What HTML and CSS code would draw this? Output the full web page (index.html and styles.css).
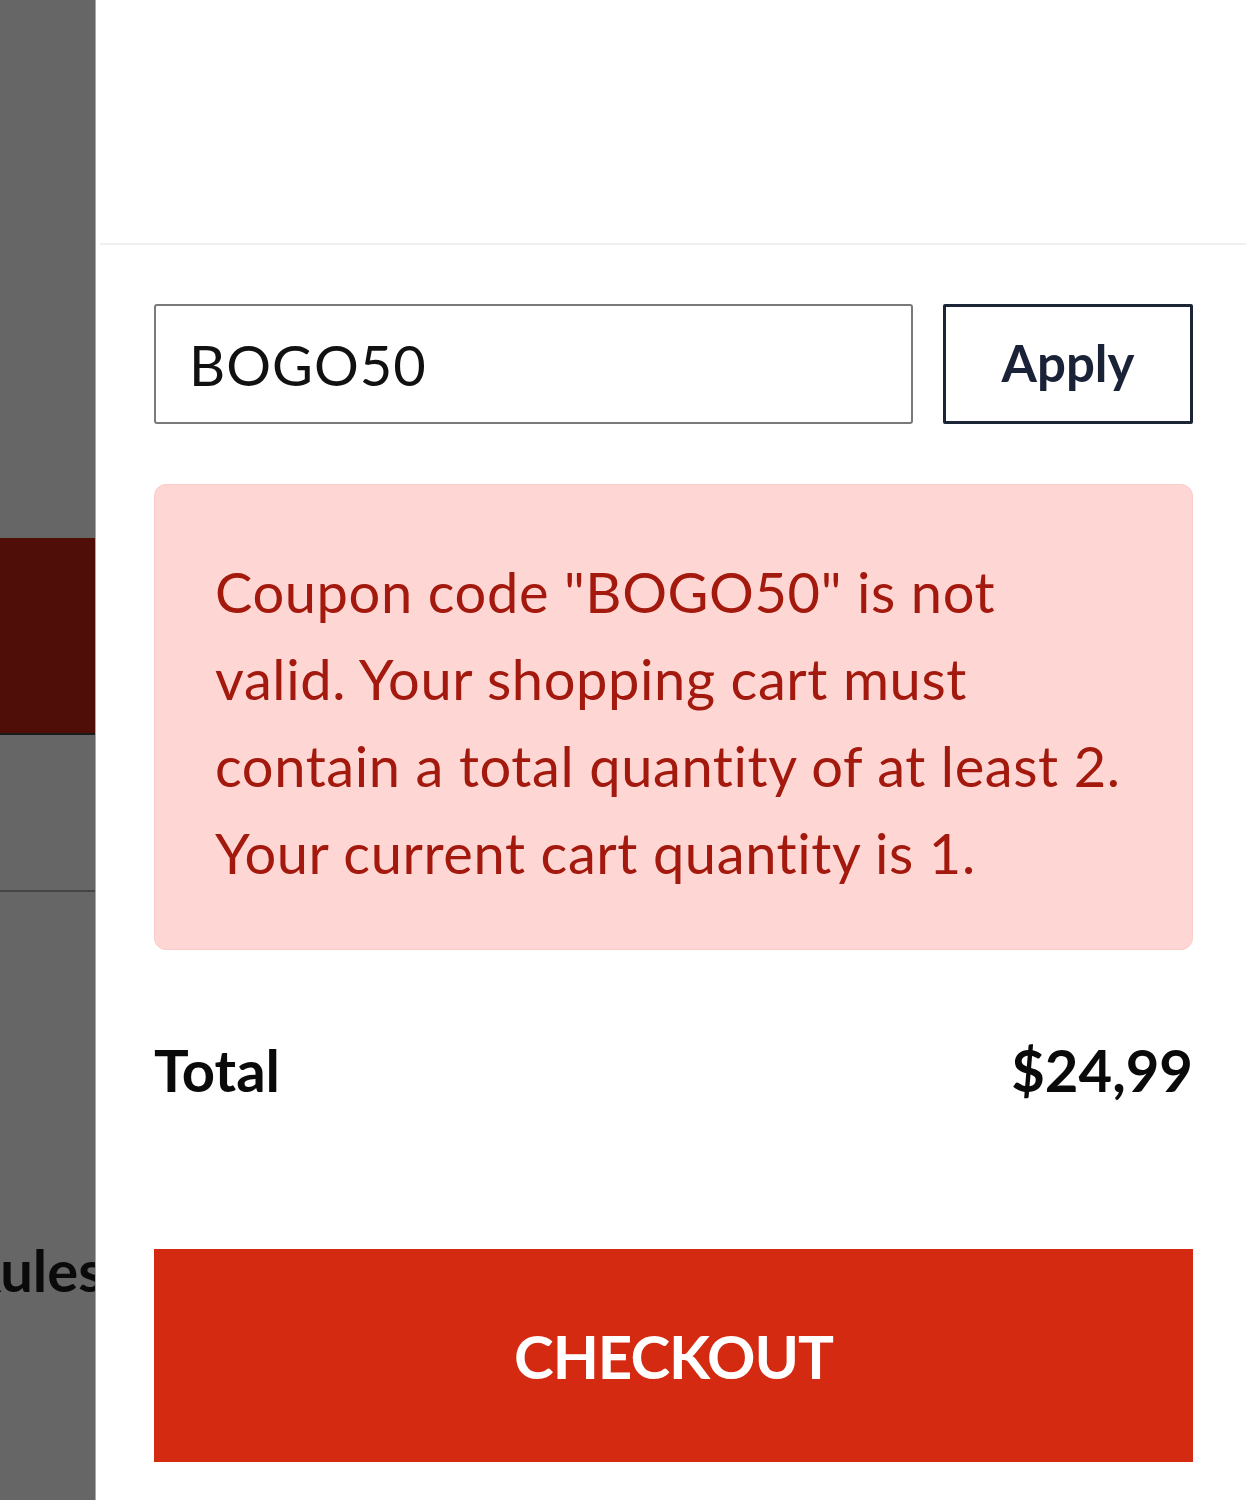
FILE: index.html
```html
<!DOCTYPE html>
<html lang="en">
<head>
<meta charset="utf-8">
<title>Cart</title>
<link rel="stylesheet" href="styles.css">
</head>
<body>
<div class="page">
  <div class="backdrop">
    <div class="bd-top"></div>
    <div class="bd-red"></div>
    <div class="bd-mid"></div>
    <div class="bd-low">
      <span class="bd-text">Rules</span>
    </div>
  </div>
  <aside class="drawer">
    <div class="drawer-head"></div>
    <div class="drawer-body">
      <form class="coupon">
        <input class="coupon-input" type="text" value="BOGO50">
        <button class="coupon-apply" type="button">Apply</button>
      </form>
      <div class="alert">Coupon code "BOGO50" is not valid. Your shopping cart must contain a total quantity of at least 2. Your current cart quantity is 1.</div>
      <div class="total-row">
        <span>Total</span>
        <span>$24,99</span>
      </div>
      <button class="checkout" type="button">Checkout</button>
    </div>
  </aside>
</div>
</body>
</html>
```

FILE: styles.css
```css
html, body {
  margin: 0;
  padding: 0;
  background: #ffffff;
}
body {
  font-family: Lato, "Open Sans", sans-serif;
  font-variant-ligatures: none;
}
.page {
  display: flex;
  min-height: 1500px;
}
.backdrop {
  width: 95px;
  flex: 0 0 95px;
  background: #666666;
  overflow: hidden;
  display: flex;
  flex-direction: column;
}
.bd-top {
  height: 538px;
}
.bd-red {
  height: 195px;
  background: #4f0f08;
  border-bottom: 2px solid #1a1a1a;
}
.bd-mid {
  height: 155px;
  border-bottom: 2px solid #444444;
}
.bd-low {
  padding-top: 343px;
  white-space: nowrap;
}
.bd-text {
  display: inline-block;
  margin-left: -36px;
  font-weight: 700;
  font-size: 58px;
  line-height: 70px;
  color: #0a0a0a;
}
.drawer {
  flex: 1;
  border-left: 1px solid #a8a8a8;
  background: #ffffff;
}
.drawer-head {
  height: 243px;
  border-bottom: 2px solid #efefef;
  margin-left: 4px;
}
.drawer-body {
  padding: 59px 53px 0 58px;
}
.coupon {
  display: flex;
  gap: 30px;
  margin: 0;
}
.coupon-input {
  flex: 1;
  min-width: 0;
  height: 120px;
  box-sizing: border-box;
  border: 2px solid #7a7a7a;
  border-radius: 3px;
  padding: 0 0 0 33px;
  font-family: Lato, sans-serif;
  font-size: 56px;
  letter-spacing: 1px;
  color: #111111;
  background: #ffffff;
  outline: none;
}
.coupon-apply {
  width: 250px;
  height: 120px;
  box-sizing: border-box;
  border: 3px solid #1c2536;
  border-radius: 2px;
  background: #ffffff;
  font-family: Lato, sans-serif;
  font-weight: 700;
  font-size: 51px;
  color: #1a2238;
  padding: 0 0 4px;
}
.alert {
  margin-top: 60px;
  box-sizing: border-box;
  min-height: 466px;
  padding: 63px 60px 53px 60px;
  background: #fed7d4;
  border: 1px solid #fbcbc6;
  border-radius: 12px;
  color: #a3190e;
  font-size: 56px;
  line-height: 87px;
  letter-spacing: 0.6px;
}
.total-row {
  margin-top: 85px;
  display: flex;
  justify-content: space-between;
  font-weight: 700;
  font-size: 58px;
  line-height: 70px;
  color: #0a0a0a;
}
.checkout {
  margin-top: 144px;
  display: block;
  width: 100%;
  height: 213px;
  border: none;
  background: #d42a12;
  color: #ffffff;
  font-family: Lato, sans-serif;
  font-weight: 700;
  font-size: 60px;
  text-transform: uppercase;
  letter-spacing: -1px;
  padding: 0;
}
```
